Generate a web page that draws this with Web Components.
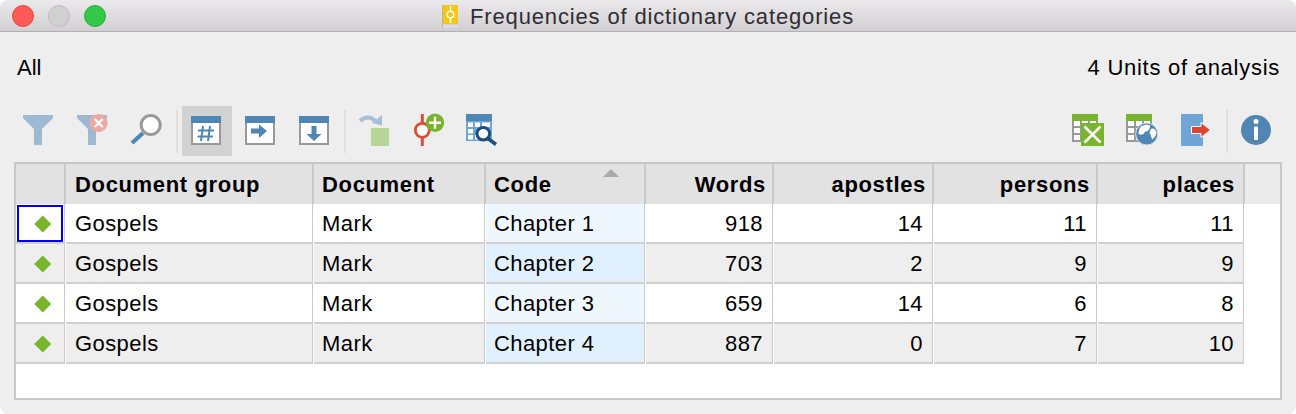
<!doctype html>
<html lang="en"><head><meta charset="utf-8"><title>Frequencies of dictionary categories</title>
<style>
html,body{margin:0;background:#fff;height:100%}
body{font-family:"Liberation Sans",Arial,sans-serif;color:#000;overflow:hidden}
</style></head><body>
<mac-window>
  <title-bar slot="title">Frequencies of dictionary categories</title-bar>
  <info-bar><span slot="left">All</span><span slot="right">4 Units of analysis</span></info-bar>
  <tool-bar>
    <tool-btn><svg viewBox="0 0 50 50"><path fill="#9dbad2" d="M10 9H40V12L29 23V39H21V23L10 12Z"/></svg></tool-btn>
    <tool-btn><svg viewBox="0 0 50 50"><path fill="#9dbad2" d="M10 9H40V12L29 23V39H21V23L10 12Z"/><circle cx="31.7" cy="17" r="9" fill="#efa9a0"/><path stroke="#fff" stroke-width="2.4" d="M27.7 13L35.7 21M35.7 13L27.7 21"/></svg></tool-btn>
    <tool-btn><svg viewBox="0 0 50 50"><path stroke="#4f86b4" stroke-width="4" d="M22 27L11 37"/><circle cx="29.7" cy="19" r="9.5" fill="#fff" stroke="#999" stroke-width="3"/></svg></tool-btn>
    <tool-sep></tool-sep>
    <tool-btn active><svg viewBox="0 0 50 50"><path fill="#fff" stroke="#999" stroke-width="2" d="M10 11H38V38H10Z"/><path fill="#4f86b4" d="M9 10H39V17H9Z"/><path stroke="#4f86b4" stroke-width="2" fill="none" d="M21 20L19 35M28 20L26 35M16 24.500H32M15.500 30.500H31"/></svg></tool-btn>
    <tool-btn tight><svg viewBox="0 0 50 50"><path fill="#fff" stroke="#999" stroke-width="2" d="M11 11H39V38H11Z"/><path fill="#4f86b4" d="M10 10H40V17H10Z"/><path fill="#4f86b4" d="M16 22.500H24V18.500L32 25L24 32V27.500H16Z"/></svg></tool-btn>
    <tool-btn><svg viewBox="0 0 50 50"><path fill="#fff" stroke="#999" stroke-width="2" d="M11 11H39V38H11Z"/><path fill="#4f86b4" d="M10 10H40V17H10Z"/><path fill="#4f86b4" d="M22.500 20H27.500V28H32.500L25 35L17.500 28H22.500Z"/></svg></tool-btn>
    <tool-sep></tool-sep>
    <tool-btn><svg viewBox="0 0 50 50"><path fill="#b7d596" d="M21 22H39V40H21Z"/><path fill="none" stroke="#a5bfd6" stroke-width="4" d="M10 15C15 10.500 21 10 26 16"/><path fill="#a5bfd6" d="M32 9V19.500L22 17Z"/></svg></tool-btn>
    <tool-btn tight><svg viewBox="0 0 50 50"><path stroke="#d94f38" stroke-width="3" d="M19.300 8V40"/><circle cx="19.300" cy="24.300" r="7" fill="#fff" stroke="#d94f38" stroke-width="2.800"/><circle cx="32" cy="16.700" r="9.200" fill="#78b52d"/><path stroke="#fff" stroke-width="2.400" d="M26 16.700H38M32 10.700V22.700"/></svg></tool-btn>
    <tool-btn tight><svg viewBox="0 0 50 50"><path fill="#6fa6d6" d="M10 8H36V35H10Z"/><path fill="#4f86b4" d="M10 8H36V15H10Z"/><path fill="#fff" d="M12 16.500H17V21H12ZM19 16.500H24V21H19ZM26 16.500H34V21H26ZM12 23H17V27.500H12ZM12 29H17V33.500H12ZM19 29H24V33.500H19Z"/><circle cx="27.300" cy="27.700" r="6.300" fill="#fff" stroke="#1c4f7c" stroke-width="3"/><path stroke="#1c4f7c" stroke-width="3.500" d="M32 32.500L40 38.500"/></svg></tool-btn>
    <tool-gap></tool-gap>
    <tool-btn><svg viewBox="0 0 50 50"><path fill="#fff" stroke="#999" stroke-width="2" d="M10 9H34V35H10Z"/><path stroke="#999" stroke-width="2" d="M10 21H34M10 28H34M18 15V35M26 15V35"/><path fill="#78b52d" d="M9 8H35V15H9Z"/><path fill="#78b52d" d="M18 17H41V40H18Z"/><path stroke="#fff" stroke-width="2.600" d="M21.500 20.500L37.500 36.500M37.500 20.500L21.500 36.500"/></svg></tool-btn>
    <tool-btn><svg viewBox="0 0 50 50"><path fill="#fff" stroke="#999" stroke-width="2" d="M10 9H34V35H10Z"/><path stroke="#999" stroke-width="2" d="M10 21H34M10 28H34M18 15V35M26 15V35"/><path fill="#78b52d" d="M9 8H35V15H9Z"/><circle cx="29.700" cy="28" r="11" fill="#4f86b4" stroke="#cfe0ee" stroke-width="1"/><path fill="#fff" d="M24 20.500C27 18.500 31 18.500 33 19.500C33.500 23 31 26 28 25.500C27 29 24 29.500 21.500 28C21.500 25 22 23 24 20.500ZM34 23C36.500 21.500 39 24 39.500 27C39 30 37 31.500 35.500 33.500C33.500 31 34.500 29 32.500 27Z"/></svg></tool-btn>
    <tool-btn><svg viewBox="0 0 50 50"><path fill="#6fa6d6" d="M10 8H32V40H10Z"/><path fill="#dc4530" stroke="#fff" stroke-width="1" d="M20.500 20.500H30V16.500L39.500 24L30 31.500V27.500H20.500Z"/></svg></tool-btn>
    <tool-sep></tool-sep>
    <tool-btn tight><svg viewBox="0 0 50 50"><circle cx="25" cy="24" r="15" fill="#4f86b4"/><circle cx="25" cy="15.500" r="2.500" fill="#fff"/><path fill="#fff" d="M23 20.500H27V34H23Z"/></svg></tool-btn>
  </tool-bar>
  <data-grid></data-grid>
</mac-window>
<script>
function tpl(html){const t=document.createElement('template');t.innerHTML=html;return t;}
function define(name,html){
  const t=tpl(html);
  customElements.define(name,class extends HTMLElement{
    constructor(){super();this.attachShadow({mode:'open'}).appendChild(t.content.cloneNode(true));}
  });
}
define('mac-window',`<style>
:host{display:flex;flex-direction:column;width:1296px;height:414px;background:#eee;border-radius:8px;overflow:hidden;box-sizing:border-box}
</style><slot name="title"></slot><slot></slot>`);
define('title-bar',`<style>
:host{display:flex;align-items:center;height:32px;box-sizing:border-box;padding-left:12px;flex:none;position:relative;
background:linear-gradient(#ebe9eb,#d1cfd1);border-bottom:1px solid #b1afb1;color:#2e2d33;font-size:22px}
.l{display:flex;gap:14px}
i{display:block;width:22px;height:22px;border-radius:50%;box-sizing:border-box;border:1px solid}
.c{display:flex;align-items:center;gap:12px;position:absolute;left:442px;top:5px;letter-spacing:.85px;line-height:22px;white-space:nowrap}
svg{display:block;width:16px;height:23px}
</style><div class="l"><i style="background:#fc5b57;border-color:#e2463f"></i><i style="background:#d0d0d0;border-color:#bdbdbd"></i><i style="background:#34c84a;border-color:#2aae3c"></i></div>
<div class="c"><svg viewBox="0 0 16 23"><path fill="#b5b5b5" d="M0 0H1V23H0Z"/><path fill="#f2c811" d="M1 0H16V19H1Z"/><path fill="#e8e8e8" d="M1 21H16V22H1Z"/><path stroke="#fff" stroke-width="1.500" d="M8.500 1V18"/><circle cx="8.500" cy="9.500" r="3.300" fill="#f2c811" stroke="#fff" stroke-width="1.500"/></svg><span><slot></slot></span></div>`);
define('info-bar',`<style>
:host{display:flex;justify-content:space-between;align-items:center;flex:none;height:70px;box-sizing:border-box;padding:2px 16px 0 17px;font-size:22px;line-height:26px}
::slotted([slot=right]){letter-spacing:.73px}
</style><slot name="left"></slot><slot name="right"></slot>`);
define('tool-bar',`<style>
:host{display:flex;align-items:center;flex:none;height:50px;margin-top:4px;padding:0 15px 0 13px;gap:4px}
</style><slot></slot>`);
define('tool-btn',`<style>
:host{display:block;flex:none;width:50px;height:50px}
:host([active]){background:#d2d2d2}
:host([tight]){margin-left:-1px}
::slotted(svg){display:block;width:50px;height:50px}
</style><slot></slot>`);
define('tool-sep',`<style>
:host{display:block;flex:none;width:2px;height:43px;background:#e0e0e0;margin:0 0 0 1px}
</style>`);
define('tool-gap',`<style>:host{display:block;flex:1}</style>`);

const cols=[50,248,172,160,128,160,164,147];
const head=['','Document group','Document','Code','Words','apostles','persons','places'];
const rows=[['Gospels','Mark','Chapter 1','918','14','11','11'],['Gospels','Mark','Chapter 2','703','2','9','9'],['Gospels','Mark','Chapter 3','659','14','6','8'],['Gospels','Mark','Chapter 4','887','0','7','10']];
let h=head.map((t,i)=>`<div class="h ${i>3?'r':''} ${i>1?'n':''} ${i==7?'last':''}">${i==3?'<b class="tri"></b>':''}<span>${t}</span></div>`).join('')+'<div class="h f"></div>';
rows.forEach((r,ri)=>{
  const even=ri%2==1;
  h+=`<div class="c m ${even?'alt':''}">${ri==0?'<u></u>':''}<em></em></div>`;
  r.forEach((t,i)=>{h+=`<div class="c ${i>2?'r':''} ${i>0?'n':''} ${even?'alt':''} ${i==2?'code':''}"><span>${t}</span></div>`;});
  h+='<div class="blank"></div>';
});
define('data-grid',`<style>
:host{display:block;flex:none;margin:6px 14px 0;height:238px;box-sizing:border-box;border:2px solid #c8c8c8;background:#fff;font-size:22px}
.g{display:grid;grid-template-columns:${cols.map(c=>c+'px').join(' ')} 1fr;grid-auto-rows:40px}
.h{background:#e2e2e2;border-right:2px solid #c9c9c9;box-sizing:border-box;display:flex;align-items:center;padding:2px 0 0 9px;font-weight:700;letter-spacing:.65px;position:relative;white-space:nowrap}
.h.n{padding-left:8px}
.h.r{justify-content:flex-end;padding-left:0;padding-right:6px}
.h.r.last{padding-right:8px}
.h.f{background:#ebebeb;border:0}
.tri{position:absolute;left:117px;top:5px;width:0;height:0;border:8px solid transparent;border-top:0;border-bottom:8px solid #aaa}
.c{box-sizing:border-box;background:#fff;border-right:1px solid #cbcbcb;border-bottom:2px solid #d0d0d0;display:flex;align-items:center;padding:2px 0 0 9px;letter-spacing:.42px;position:relative;white-space:nowrap;margin-right:1px}
.c.n{padding-left:8px}
.c.r{justify-content:flex-end;padding:2px 9px 0 0}
.c.alt{background:#eee;box-shadow:1px 0 0 #fff}
.c.code{background:#eff7fe}
.c.code.alt{background:#e0f0fd}
.c.m{padding:2px 0 0 21px}
em{display:block;width:11.500px;height:11.500px;background:#78b52d;transform:rotate(45deg)}
u{position:absolute;left:1px;top:1px;right:1px;bottom:0;border:2px solid #0000f0}
.blank{background:#fff}
</style><div class="g">${h}</div>`);
</script>
</body></html>
